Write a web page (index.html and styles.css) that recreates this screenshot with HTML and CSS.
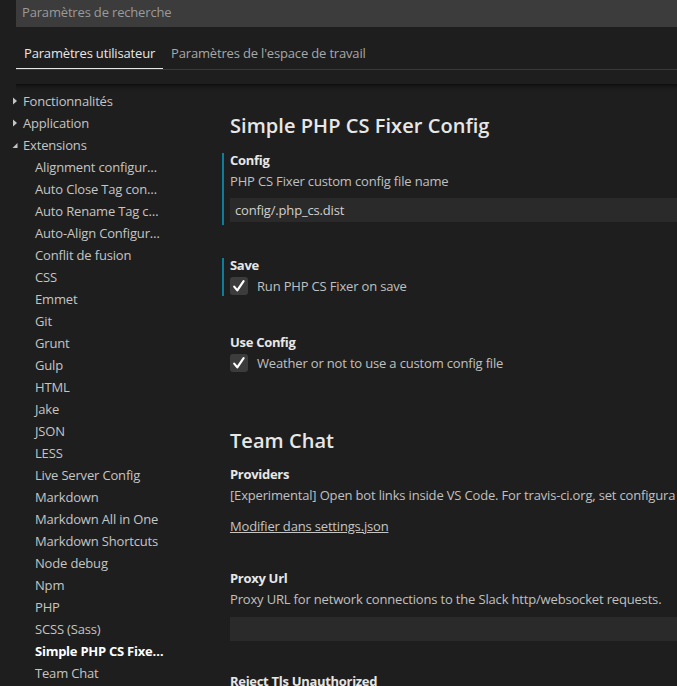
FILE: index.html
```html
<!DOCTYPE html>
<html lang="fr">
<head>
<meta charset="utf-8">
<title>Paramètres</title>
<link rel="stylesheet" href="styles.css">
</head>
<body>
<div class="header">
  <div class="search">Paramètres de recherche</div>
  <div class="tabs">
    <div class="tab active">Paramètres utilisateur</div>
    <div class="tab">Paramètres de l'espace de travail</div>
  </div>
</div>
<div class="body">
  <nav class="toc">
    <div class="toc-row top"><svg class="twisty" width="6" height="8" viewBox="0 0 6 8"><path d="M1 0.5 L5 4 L1 7.5 Z" fill="#c5c5c5"/></svg>Fonctionnalités</div>
    <div class="toc-row top"><svg class="twisty" width="6" height="8" viewBox="0 0 6 8"><path d="M1 0.5 L5 4 L1 7.5 Z" fill="#c5c5c5"/></svg>Application</div>
    <div class="toc-row top"><svg class="twisty" width="6" height="8" viewBox="0 0 6 8"><path d="M5.5 2 L5.5 7 L0.5 7 Z" fill="#c5c5c5"/></svg>Extensions</div>
    <div class="toc-row child">Alignment configur…</div>
    <div class="toc-row child">Auto Close Tag con…</div>
    <div class="toc-row child">Auto Rename Tag c…</div>
    <div class="toc-row child">Auto-Align Configur…</div>
    <div class="toc-row child">Conflit de fusion</div>
    <div class="toc-row child">CSS</div>
    <div class="toc-row child">Emmet</div>
    <div class="toc-row child">Git</div>
    <div class="toc-row child">Grunt</div>
    <div class="toc-row child">Gulp</div>
    <div class="toc-row child">HTML</div>
    <div class="toc-row child">Jake</div>
    <div class="toc-row child">JSON</div>
    <div class="toc-row child">LESS</div>
    <div class="toc-row child">Live Server Config</div>
    <div class="toc-row child">Markdown</div>
    <div class="toc-row child">Markdown All in One</div>
    <div class="toc-row child">Markdown Shortcuts</div>
    <div class="toc-row child">Node debug</div>
    <div class="toc-row child">Npm</div>
    <div class="toc-row child">PHP</div>
    <div class="toc-row child">SCSS (Sass)</div>
    <div class="toc-row child selected">Simple PHP CS Fixe…</div>
    <div class="toc-row child">Team Chat</div>
  </nav>
  <main class="main">
    <h2 class="group-title">Simple PHP CS Fixer Config</h2>

    <section class="item modified item-config">
      <div class="item-title">Config</div>
      <div class="item-desc">PHP CS Fixer custom config file name</div>
      <div class="input">config/.php_cs.dist</div>
    </section>

    <section class="item modified item-save">
      <div class="item-title">Save</div>
      <div class="check-row">
        <span class="checkbox"><svg width="18" height="18" viewBox="0 0 18 18"><path d="M4.2 9.6 L7.3 13.4 L13.6 4.2" fill="none" stroke="#ffffff" stroke-width="2.2" stroke-linecap="round" stroke-linejoin="round"/></svg></span>
        <span class="check-label">Run PHP CS Fixer on save</span>
      </div>
    </section>

    <section class="item item-useconfig">
      <div class="item-title">Use Config</div>
      <div class="check-row">
        <span class="checkbox"><svg width="18" height="18" viewBox="0 0 18 18"><path d="M4.2 9.6 L7.3 13.4 L13.6 4.2" fill="none" stroke="#ffffff" stroke-width="2.2" stroke-linecap="round" stroke-linejoin="round"/></svg></span>
        <span class="check-label">Weather or not to use a custom config file</span>
      </div>
    </section>

    <h2 class="group-title team">Team Chat</h2>

    <section class="item item-providers">
      <div class="item-title">Providers</div>
      <div class="item-desc">[Experimental] Open bot links inside VS Code. For travis-ci.org, set configura</div>
      <a class="link">Modifier dans settings.json</a>
    </section>

    <section class="item item-proxy">
      <div class="item-title">Proxy Url</div>
      <div class="item-desc">Proxy URL for network connections to the Slack http/websocket requests.</div>
      <div class="input"></div>
    </section>

    <section class="item item-reject">
      <div class="item-title">Reject Tls Unauthorized</div>
    </section>
  </main>
</div>
</body>
</html>
```
FILE: styles.css
```css
html, body {
  margin: 0;
  padding: 0;
  height: 100%;
  overflow: hidden;
}
body {
  background: #1e1e1e;
  color: #c5c5c5;
  font-family: "Open Sans", "Noto Sans", sans-serif;
  font-size: 13px;
  letter-spacing: -0.17px;
}
.header {
  padding-left: 16px;
  height: 84px;
  box-sizing: border-box;
}
.search {
  height: 27px;
  line-height: 24px;
  background: #3c3c3c;
  color: #9a9a9a;
  padding-left: 6px;
}
.tabs {
  display: flex;
  margin-top: 15px;
  height: 27px;
  border-bottom: 1px solid #3a3a3a;
}
.tab {
  padding: 0 8px;
  line-height: 22px;
  color: #a8a8a8;
  white-space: nowrap;
}
.tab.active {
  color: #e7e7e7;
  border-bottom: 1px solid #e7e7e7;
}
.body {
  display: flex;
  height: calc(100% - 84px);
  box-shadow: inset 16px 0 0 #1e1e1e, inset 0 6px 6px -6px #000;
}
.toc {
  width: 222px;
  flex: none;
  padding-top: 6px;
}
.toc-row {
  height: 22px;
  line-height: 22px;
  white-space: nowrap;
  color: #c5c5c5;
  display: flex;
  align-items: center;
}
.toc-row.top {
  padding-left: 12px;
}
.twisty {
  margin-right: 5px;
  flex: none;
}
.toc-row.child {
  padding-left: 35px;
}
.toc-row.selected {
  color: #ffffff;
  font-weight: 700;
  letter-spacing: -0.25px;
}
.main {
  flex: 1;
  min-width: 0;
  padding-top: 28px;
  overflow: hidden;
}
.group-title {
  margin: 0 0 13px 8px;
  font-size: 20px;
  line-height: 28px;
  font-weight: 600;
  letter-spacing: 0.05px;
  color: #e7e7e7;
}
.group-title.team {
  margin-top: 55px;
  margin-bottom: 0;
}
.item {
  border-left: 2px solid transparent;
  padding-left: 6px;
}
.item.modified {
  border-left-color: #0c7d9d;
}
.item-title {
  font-weight: 700;
  line-height: 14px;
  color: #e7e7e7;
  letter-spacing: -0.3px;
  white-space: nowrap;
}
.item-desc {
  margin-top: 5px;
  line-height: 18px;
  color: #c0c0c0;
  white-space: nowrap;
}
.input {
  margin-top: 8px;
  height: 24px;
  line-height: 24px;
  background: #2a2a2a;
  padding-left: 5px;
  color: #d0d0d0;
}
.item-config {
  padding-bottom: 3px;
}
.item-save {
  margin-top: 33px;
  padding-bottom: 1px;
}
.item-useconfig {
  margin-top: 39px;
}
.check-row {
  display: flex;
  align-items: center;
  margin-top: 5px;
  height: 18px;
}
.checkbox {
  width: 18px;
  height: 18px;
  border-radius: 3px;
  background: #3c3c3c;
  flex: none;
  display: flex;
}
.check-label {
  margin-left: 9px;
  color: #c0c0c0;
  white-space: nowrap;
}
.item-providers {
  margin-top: 12px;
}
.link {
  display: block;
  margin-top: 13px;
  line-height: 18px;
  color: #c5c5c5;
  text-decoration: underline;
  white-space: nowrap;
}
.item-proxy {
  margin-top: 36px;
}
.item-proxy .input {
  margin-top: 9px;
}
.item-reject {
  margin-top: 33px;
}
```
